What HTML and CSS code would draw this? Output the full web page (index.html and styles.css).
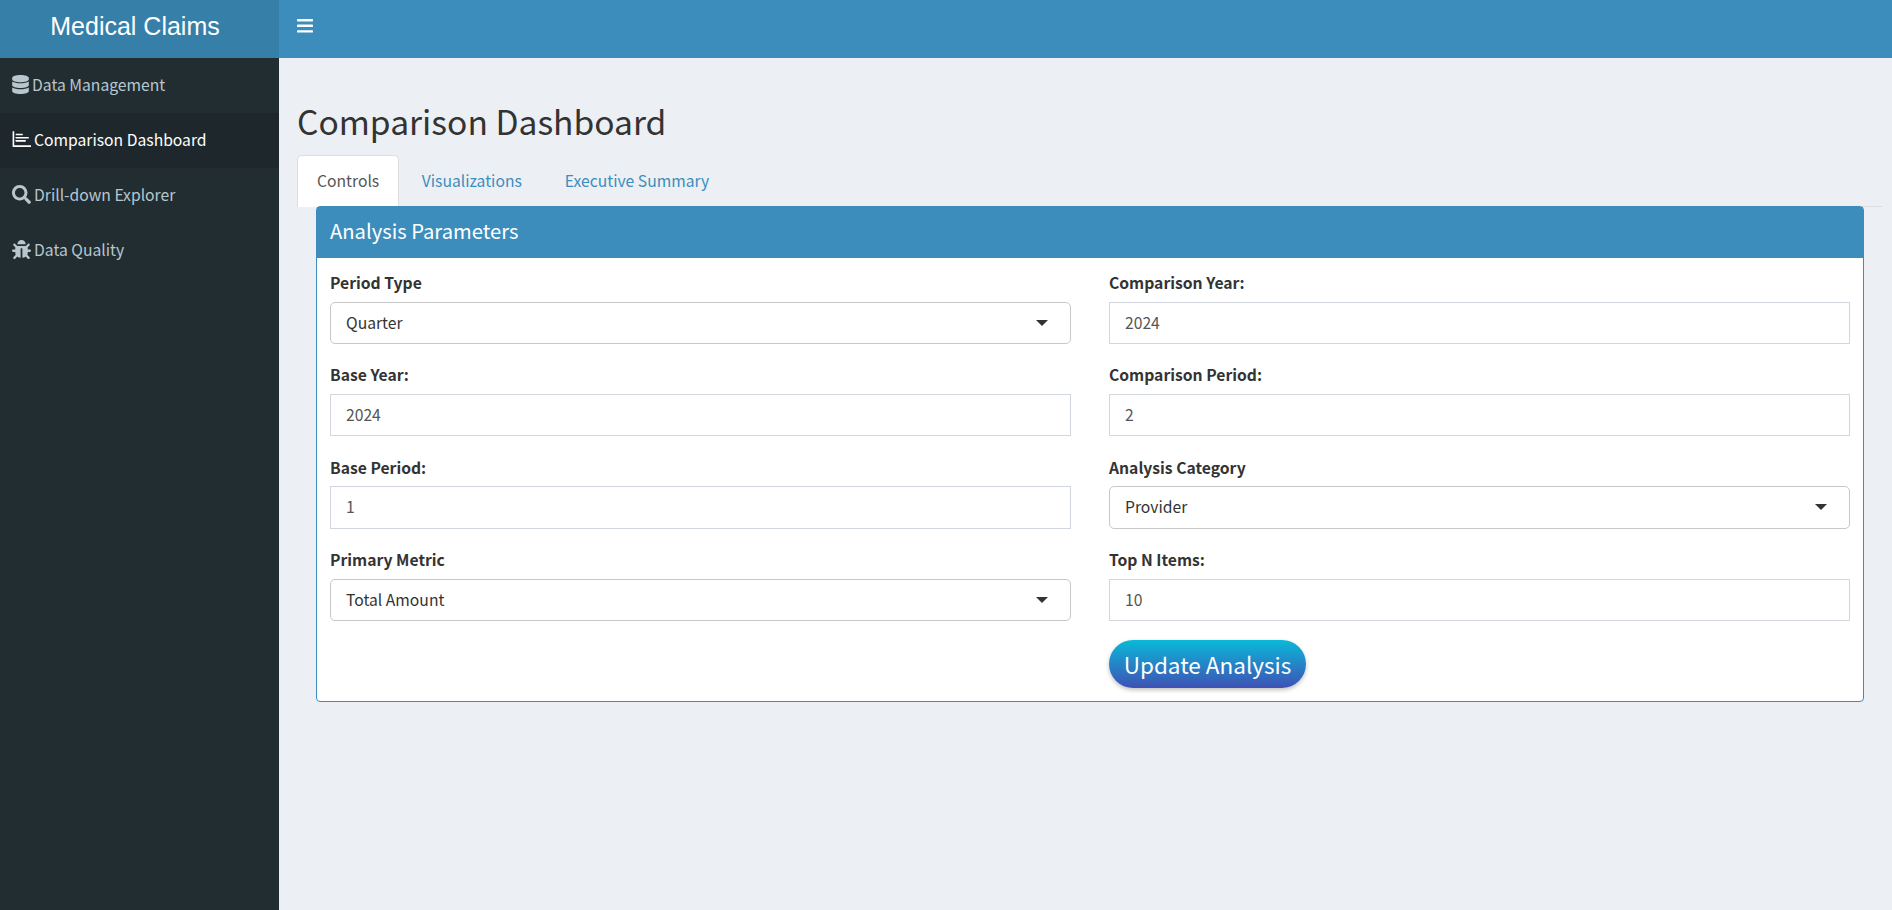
FILE: index.html
```html
<!DOCTYPE html>
<html lang="en">
<head>
<meta charset="utf-8">
<title>Medical Claims</title>
<link rel="stylesheet" href="styles.css">
</head>
<body>
<header class="topbar">
  <div class="logo">Medical Claims</div>
  <nav class="navbar">
    <svg class="burger" viewBox="0 0 16 14" aria-hidden="true"><rect y="0" width="16" height="2.4" rx=".6"/><rect y="5.6" width="16" height="2.4" rx=".6"/><rect y="11.2" width="16" height="2.4" rx=".6"/></svg>
  </nav>
</header>
<div class="shell">
  <aside class="sidebar">
    <a class="item">
      <svg class="ic ic-db" viewBox="0 0 448 512"><path d="M448 73.143v45.714C448 159.143 347.667 192 224 192S0 159.143 0 118.857V73.143C0 32.857 100.333 0 224 0s224 32.857 224 73.143zM448 176v102.857C448 319.143 347.667 352 224 352S0 319.143 0 278.857V176c48.125 33.143 136.208 48.572 224 48.572S399.874 209.143 448 176zm0 160v102.857C448 479.143 347.667 512 224 512S0 479.143 0 438.857V336c48.125 33.143 136.208 48.572 224 48.572S399.874 369.143 448 336z"/></svg>
      <span>Data Management</span>
    </a>
    <a class="item active">
      <svg class="ic" viewBox="0 0 512 512"><path d="M16 32h44v380h452v44H34a18 18 0 0 1-18-18z"/><rect x="100" y="100" width="190" height="44" rx="6"/><rect x="100" y="186" width="350" height="44" rx="6"/><rect x="100" y="272" width="270" height="44" rx="6"/></svg>
      <span>Comparison Dashboard</span>
    </a>
    <a class="item">
      <svg class="ic" viewBox="0 0 512 512"><path d="M505 442.700L405.300 343c-4.500-4.500-10.600-7-17-7H372c27.600-35.300 44-79.700 44-128C416 93.100 322.900 0 208 0S0 93.100 0 208s93.100 208 208 208c48.300 0 92.700-16.400 128-44v16.300c0 6.400 2.500 12.500 7 17l99.700 99.700c9.400 9.400 24.600 9.400 33.900 0l28.300-28.300c9.400-9.400 9.400-24.600.1-34zM208 336c-70.700 0-128-57.200-128-128 0-70.700 57.200-128 128-128 70.700 0 128 57.200 128 128 0 70.700-57.200 128-128 128z"/></svg>
      <span>Drill-down Explorer</span>
    </a>
    <a class="item">
      <svg class="ic" viewBox="0 0 512 512"><path d="M511.988 288.900c-.478 17.430-15.217 31.100-32.653 31.100H424v16c0 21.864-4.882 42.584-13.600 61.145l60.228 60.228c12.496 12.497 12.496 32.758 0 45.255-12.498 12.497-32.759 12.496-45.256 0l-54.736-54.736C345.886 467.965 314.351 480 280 480V236c0-6.627-5.373-12-12-12h-24c-6.627 0-12 5.373-12 12v244c-34.351 0-65.886-12.035-90.636-32.108l-54.736 54.736c-12.498 12.497-32.759 12.496-45.256 0-12.496-12.497-12.496-32.758 0-45.255l60.228-60.228C92.882 378.584 88 357.864 88 336v-16H32.666C15.230 320 .491 306.330.013 288.900-.484 270.816 14.028 256 32 256h56v-58.745l-46.628-46.628c-12.496-12.497-12.496-32.758 0-45.255 12.498-12.497 32.758-12.497 45.256 0L141.255 160h229.489l54.627-54.627c12.498-12.497 32.758-12.497 45.256 0 12.496 12.497 12.496 32.758 0 45.255L424 197.255V256h56c17.972 0 32.484 14.816 31.988 32.900zM257 0c-61.856 0-112 50.144-112 112h224C369 50.144 318.856 0 257 0z"/></svg>
      <span>Data Quality</span>
    </a>
  </aside>
  <main class="content">
    <h1 class="title">Comparison Dashboard</h1>
    <ul class="tabs">
      <li class="tab current">Controls</li>
      <li class="tab">Visualizations</li>
      <li class="tab">Executive Summary</li>
    </ul>
    <section class="box">
      <h3 class="box-head">Analysis Parameters</h3>
      <div class="box-body">
        <div class="col">
          <div class="field"><label>Period Type</label><div class="select">Quarter<i class="caret"></i></div></div>
          <div class="field"><label>Base Year:</label><div class="input">2024</div></div>
          <div class="field"><label>Base Period:</label><div class="input">1</div></div>
          <div class="field"><label>Primary Metric</label><div class="select">Total Amount<i class="caret"></i></div></div>
        </div>
        <div class="col">
          <div class="field"><label>Comparison Year:</label><div class="input">2024</div></div>
          <div class="field"><label>Comparison Period:</label><div class="input">2</div></div>
          <div class="field"><label>Analysis Category</label><div class="select">Provider<i class="caret"></i></div></div>
          <div class="field"><label>Top N Items:</label><div class="input">10</div></div>
          <button class="update" type="button">Update Analysis</button>
        </div>
      </div>
    </section>
  </main>
</div>
</body>
</html>
```
FILE: styles.css
```css
* { box-sizing: border-box; }
html, body { height: 100%; }
body {
  margin: 0;
  display: flex;
  flex-direction: column;
  background: #ecf0f5;
  color: #333;
  font-family: "Noto Sans CJK SC", "Noto Sans", sans-serif;
  font-size: 15.7px;
  overflow: hidden;
}
.topbar { display: flex; height: 58px; flex: none; background: #3c8dbc; }
.logo {
  width: 279px;
  padding-right: 9px;
  background: #367fa9;
  color: #fff;
  font-family: "Liberation Sans", Arial, sans-serif;
  font-size: 25px;
  line-height: 53px;
  text-align: center;
}
.navbar { flex: 1; display: flex; align-items: center; padding-left: 18px; }
.burger { width: 16px; height: 14px; fill: #fff; margin-bottom: 6px; }
.shell { flex: 1; display: flex; min-height: 0; }
.sidebar { width: 279px; flex: none; background: #222d32; }
.item {
  height: 55px;
  display: flex;
  align-items: center;
  gap: 3px;
  padding: 0 0 2px 12px;
  color: #b8c7ce;
  line-height: 1;
}
.item.active { background: #1e282c; color: #fff; }
.ic { width: 19px; height: 19px; fill: currentColor; flex: none; }
.ic-db { width: 17px; }
.content { flex: 1; min-width: 0; padding: 0 10px 0 18px; }
.title {
  margin: 0;
  padding-top: 34px;
  font-size: 33.6px;
  font-weight: 400;
  line-height: 58px;
  height: 97px;
}
.tabs {
  display: flex;
  list-style: none;
  margin: 0;
  padding: 0;
  height: 52px;
  border-bottom: 1px solid #ddd;
}
.tab {
  height: 52px;
  padding: 0 19.5px;
  margin-right: 2px;
  line-height: 50px;
  color: #3c8dbc;
  border: 1px solid transparent;
  border-bottom: 0;
  border-radius: 5px 5px 0 0;
}
.tab.current { background: #fff; color: #555; border-color: #ddd; padding: 0 19px; }
.box {
  margin: -1px 18px 0 19px;
  height: 496px;
  background: #fff;
  border: 1px solid #3c8dbc;
  border-radius: 4px;
  position: relative;
}
.box-head {
  margin: 0;
  height: 51px;
  padding-left: 13px;
  background: #3c8dbc;
  color: #fff;
  font-size: 20.2px;
  font-weight: 400;
  line-height: 48px;
}
.box-body { display: flex; gap: 38px; padding: 11px 13px 0; }
.col { flex: 1; min-width: 0; }
.field { height: 92.4px; }
.field label {
  display: block;
  height: 32.5px;
  line-height: 27px;
  font-weight: 700;
  color: #333;
}
.select, .input {
  height: 42.5px;
  line-height: 39px;
  padding: 0 15px;
  border: 1px solid #d2d6de;
  background: #fff;
}
.select {
  position: relative;
  border-color: #c8c8c8;
  border-radius: 5px;
  color: #333;
}
.input { color: #555; }
.caret {
  position: absolute;
  right: 22px;
  top: 17px;
  border-style: solid;
  border-width: 6px 6px 0;
  border-color: #333 transparent transparent;
}
.update {
  display: block;
  width: 197px;
  height: 48px;
  margin-top: 1px;
  padding: 0;
  border: 0;
  border-radius: 24px;
  background: linear-gradient(#09b9d8, #3f51b5);
  box-shadow: 0 2px 4px rgba(0,0,0,.25);
  color: #fff;
  font-family: inherit;
  font-size: 22.5px;
  line-height: 44px;
}
```
